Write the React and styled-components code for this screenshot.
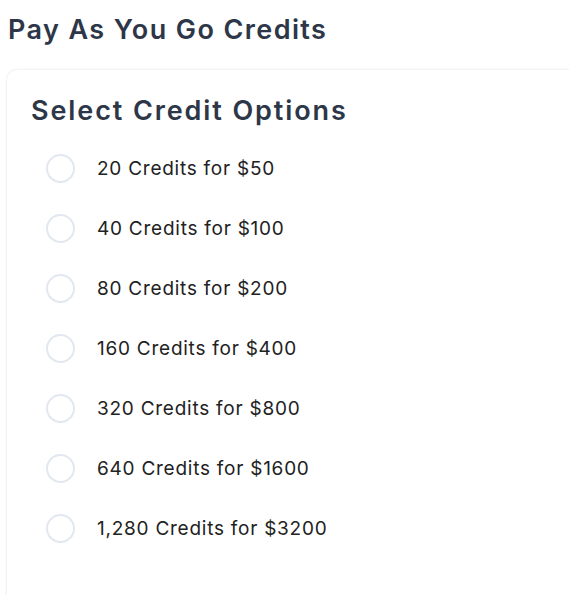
import React, { useState } from 'react';
import styled, { createGlobalStyle } from 'styled-components';

const GlobalStyle = createGlobalStyle`
  body {
    margin: 0;
    background: #ffffff;
    font-family: 'Inter', 'Noto Sans', sans-serif;
  }
`;

const options = [
  { credits: '20', price: '$50' },
  { credits: '40', price: '$100' },
  { credits: '80', price: '$200' },
  { credits: '160', price: '$400' },
  { credits: '320', price: '$800' },
  { credits: '640', price: '$1600' },
  { credits: '1,280', price: '$3200' },
];

export default function App() {
  const [selected, setSelected] = useState(null);

  return (
    <>
      <GlobalStyle />
      <Page>
        <PageTitle>Pay As You Go Credits</PageTitle>
        <Card>
          <CardTitle>Select Credit Options</CardTitle>
          <OptionList>
            {options.map((opt, index) => (
              <Option key={index} onClick={() => setSelected(index)}>
                <Radio $checked={selected === index} />
                <span>
                  {opt.credits} Credits for {opt.price}
                </span>
              </Option>
            ))}
          </OptionList>
        </Card>
      </Page>
    </>
  );
}

const Page = styled.div`
  padding: 13px 0 0 8px;
  overflow: hidden;
  height: 595px;
  box-sizing: border-box;
`;

const PageTitle = styled.h1`
  margin: 0 0 23px;
  font-size: 27px;
  font-weight: 600;
  letter-spacing: 1.4px;
  color: #2d3748;
  line-height: 34px;
`;

const Card = styled.section`
  margin-left: -1px;
  width: 620px;
  min-height: 560px;
  background: #fff;
  border-radius: 10px;
  box-shadow: 0 0 3px rgba(0, 0, 0, 0.12);
  padding: 23px 0 0 24px;
  box-sizing: border-box;
`;

const CardTitle = styled.h2`
  margin: 0 0 24px;
  font-size: 27px;
  font-weight: 600;
  letter-spacing: 1.9px;
  color: #2d3748;
  line-height: 36px;
`;

const OptionList = styled.ul`
  list-style: none;
  margin: 0;
  padding: 0 0 0 15px;
  display: flex;
  flex-direction: column;
  gap: 30px;
`;

const Option = styled.li`
  display: flex;
  align-items: center;
  gap: 22px;
  height: 30px;
  font-size: 19px;
  letter-spacing: 0.75px;
  color: #222;
  cursor: pointer;
`;

const Radio = styled.span`
  width: 25px;
  height: 25px;
  border-radius: 50%;
  border: 2px solid ${(p) => (p.$checked ? '#3b82f6' : '#e2e8f0')};
  flex-shrink: 0;
`;
